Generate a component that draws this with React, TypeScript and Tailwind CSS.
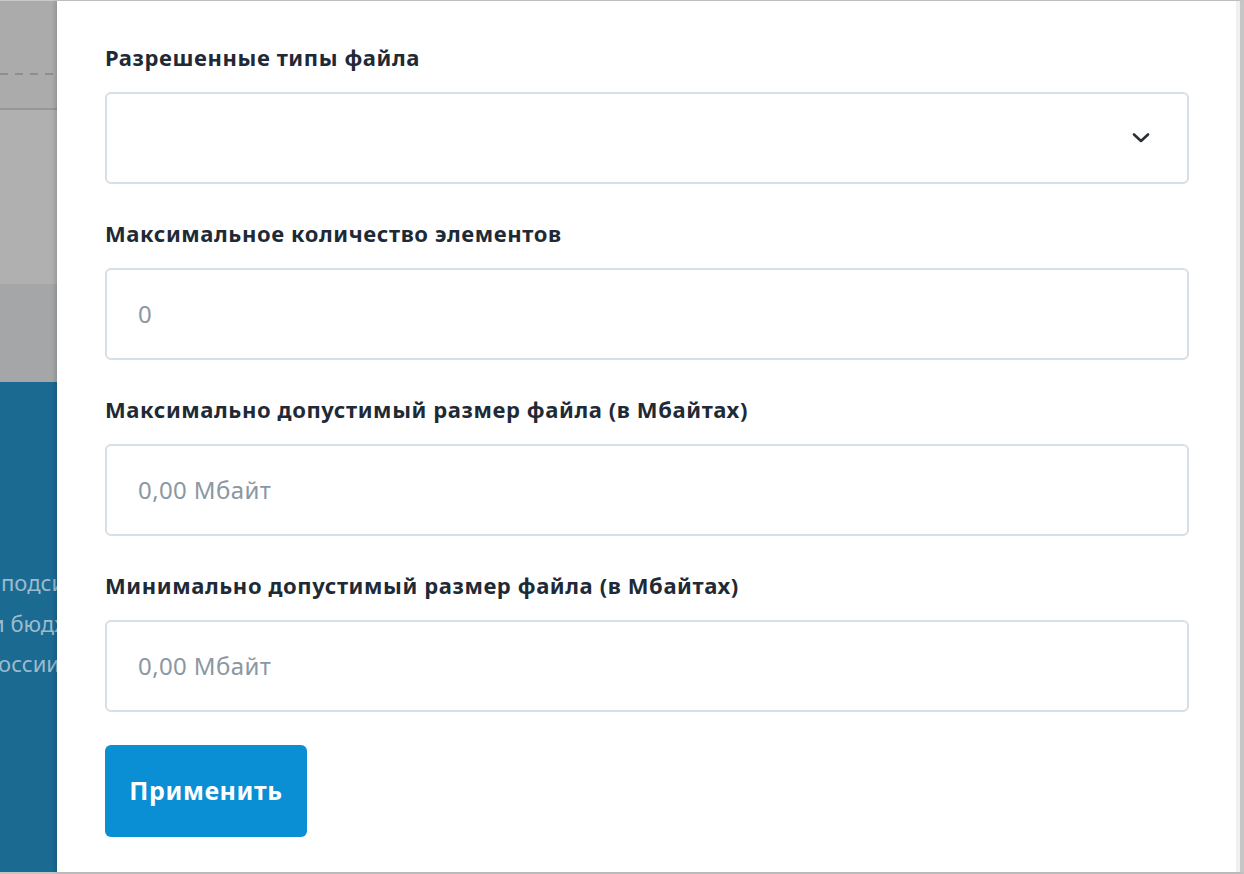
import React from "react";

const font = { fontFamily: '"Noto Sans", "DejaVu Sans", sans-serif' };

function Label({ children }: { children: React.ReactNode }) {
  return (
    <div className="h-[34px] flex items-center text-[22px] tracking-[0.6px] font-bold text-[#1e2a36] leading-none whitespace-nowrap">
      {children}
    </div>
  );
}

function Field({ placeholder, select }: { placeholder?: string; select?: boolean }) {
  return (
    <div className="mt-[18px] h-[92px] rounded-[6px] border-2 border-[#d6dfe5] flex items-center pl-[31px] pr-[36px] justify-between">
      <span className="text-[24px] tracking-[0.4px] text-[#8b97a2]">{placeholder ?? ""}</span>
      {select && (
        <svg width="20" height="12" viewBox="0 0 20 12" fill="none">
          <path d="M3 2.5 L10 9 L17 2.5" stroke="#2a2f35" strokeWidth="2.6" strokeLinecap="round" strokeLinejoin="round" />
        </svg>
      )}
    </div>
  );
}

export default function App() {
  return (
    <div className="w-[1244px] h-[874px] overflow-hidden flex flex-col bg-white" style={font}>
      <div className="h-[1px] bg-[#c9c9c9]" />
      <div className="flex flex-1 min-h-0">
        {/* left dim strip */}
        <div className="w-[57px] flex flex-col overflow-hidden shrink-0">
          <div className="h-[72px] bg-[#ababab]" />
          <div className="h-[2px] bg-[#ababab] bg-[repeating-linear-gradient(90deg,#8c8f91_0_8px,transparent_8px_15px)]" />
          <div className="h-[33px] bg-[#ababab]" />
          <div className="h-[2px] bg-[#979797]" />
          <div className="h-[174px] bg-[#b0b0b0]" />
          <div className="h-[98px] bg-[#a5a6a7]" />
          <div className="flex-1 bg-[#1b6a92] pt-[180px] whitespace-nowrap text-[22px] leading-[40.5px] text-[#9bbccd]">
            <div className="ml-[1px]">подсистемы</div>
            <div className="ml-[-9px]">и бюджетного</div>
            <div className="ml-[-15px]">России</div>
          </div>
        </div>
        {/* panel */}
        <div className="flex-1 flex bg-white shadow-[-2px_0_4px_rgba(0,0,0,0.15)] relative">
          <div className="flex-1 pl-[48px] pr-[47px] pt-[39px]">
            <Label>Разрешенные типы файла</Label>
            <Field select />
            <div className="h-[32px]" />
            <Label>Максимальное количество элементов</Label>
            <Field placeholder="0" />
            <div className="h-[32px]" />
            <Label>Максимально допустимый размер файла (в Мбайтах)</Label>
            <Field placeholder="0,00 Мбайт" />
            <div className="h-[32px]" />
            <Label>Минимально допустимый размер файла (в Мбайтах)</Label>
            <Field placeholder="0,00 Мбайт" />
            <button className="mt-[33px] w-[202px] h-[92px] rounded-[6px] bg-[#0a8fd5] text-white text-[25px] tracking-[0.6px] font-bold flex items-center justify-center">
              Применить
            </button>
          </div>
          {/* scrollbar */}
          <div className="w-[8px] flex">
            <div className="w-[4px] bg-[#f0f0f0]" />
            <div className="w-[4px] bg-[#c6c6c6]" />
          </div>
        </div>
      </div>
      <div className="h-[2px] bg-[#c4c4c4]" />
    </div>
  );
}
